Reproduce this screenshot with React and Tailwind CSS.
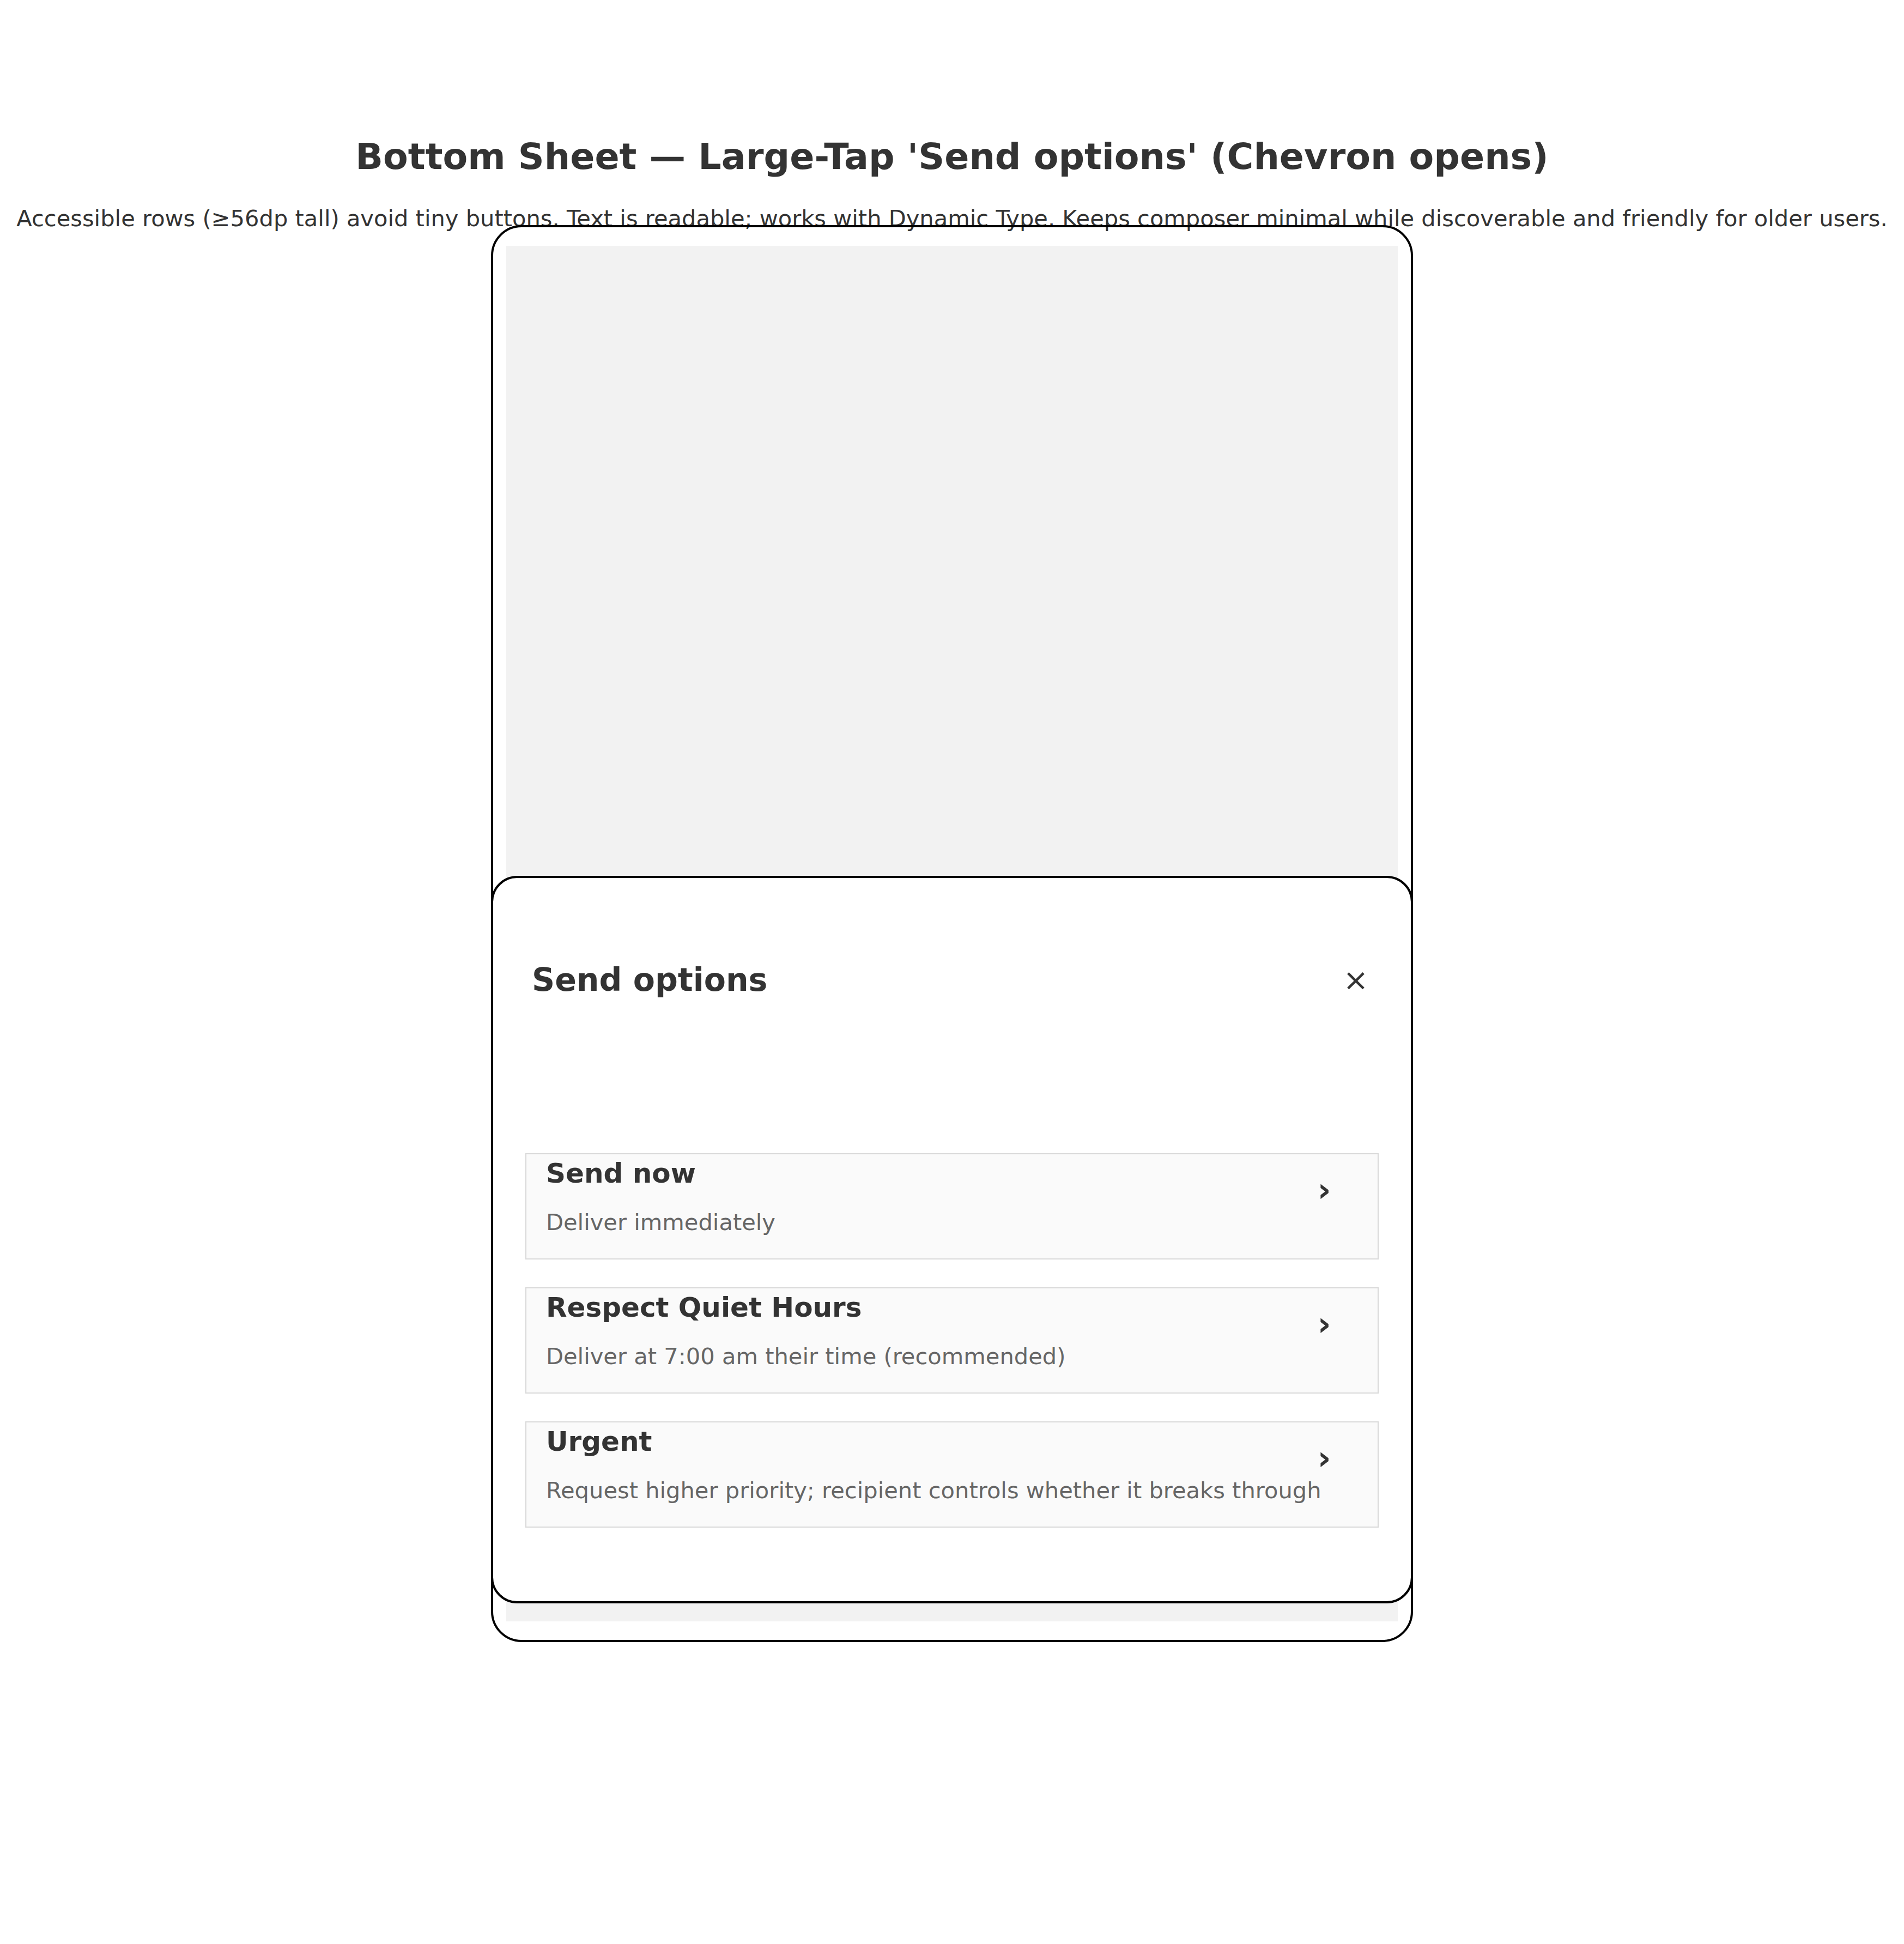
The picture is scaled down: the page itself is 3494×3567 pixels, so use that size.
const options = [
  { title: "Send now", sub: "Deliver immediately" },
  { title: "Respect Quiet Hours", sub: "Deliver at 7:00 am their time (recommended)" },
  { title: "Urgent", sub: "Request higher priority; recipient controls whether it breaks through" },
];

function OptionRow({ title, sub }) {
  return (
    <button className="flex h-[195px] w-full items-start justify-between border-2 border-[#d9d9d9] bg-[#fafafa] pl-[36px] pr-[68px] pt-[5px] text-left">
      <div className="min-w-0">
        <div className="whitespace-nowrap text-[50px] font-bold leading-[60px] text-[#333]">{title}</div>
        <div className="mt-[34px] whitespace-nowrap text-[41.6px] leading-[52px] text-[#666]">{sub}</div>
      </div>
      <span className="mt-[25px] w-[60px] shrink-0 text-center text-[60px] font-bold leading-[70px] text-[#333]">›</span>
    </button>
  );
}

export default function App() {
  return (
    <div className="min-h-screen bg-white pb-[400px] font-['DejaVu_Sans',sans-serif] text-[#333]">
      {/* Header */}
      <div className="pt-[249px] text-center">
        <h1 className="text-[66.6px] font-bold leading-[76px]">
          Bottom Sheet — Large-Tap 'Send options' (Chevron opens)
        </h1>
        <p className="mt-[50px] whitespace-nowrap text-[41.6px] leading-[52px]">
          Accessible rows (≥56dp tall) avoid tiny buttons. Text is readable; works with Dynamic Type. Keeps composer minimal while discoverable and friendly for older users.
        </p>
      </div>

      {/* Phone frame */}
      <div className="relative mx-auto -mt-[14px] h-[2600px] w-[1692px] rounded-[56px] border-4 border-black px-[24px] py-[34px]">
        <div className="h-full bg-[#f2f2f2]" />

        {/* Bottom sheet */}
        <div className="absolute -left-[4px] -right-[4px] top-[1190px] h-[1335px] rounded-[48px] border-4 border-black bg-white px-[59px] pt-[152px]">
          <div className="flex items-center justify-between px-[12px]">
            <h2 className="text-[58.5px] font-bold leading-[70px] text-[#333]">Send options</h2>
            <button className="flex h-[60px] w-[60px] items-center justify-center text-[56px] leading-none text-[#333]">×</button>
          </div>

          <div className="mt-[283px] flex flex-col gap-[51px]">
            {options.map((o) => (
              <OptionRow key={o.title} title={o.title} sub={o.sub} />
            ))}
          </div>
        </div>
      </div>
    </div>
  );
}
